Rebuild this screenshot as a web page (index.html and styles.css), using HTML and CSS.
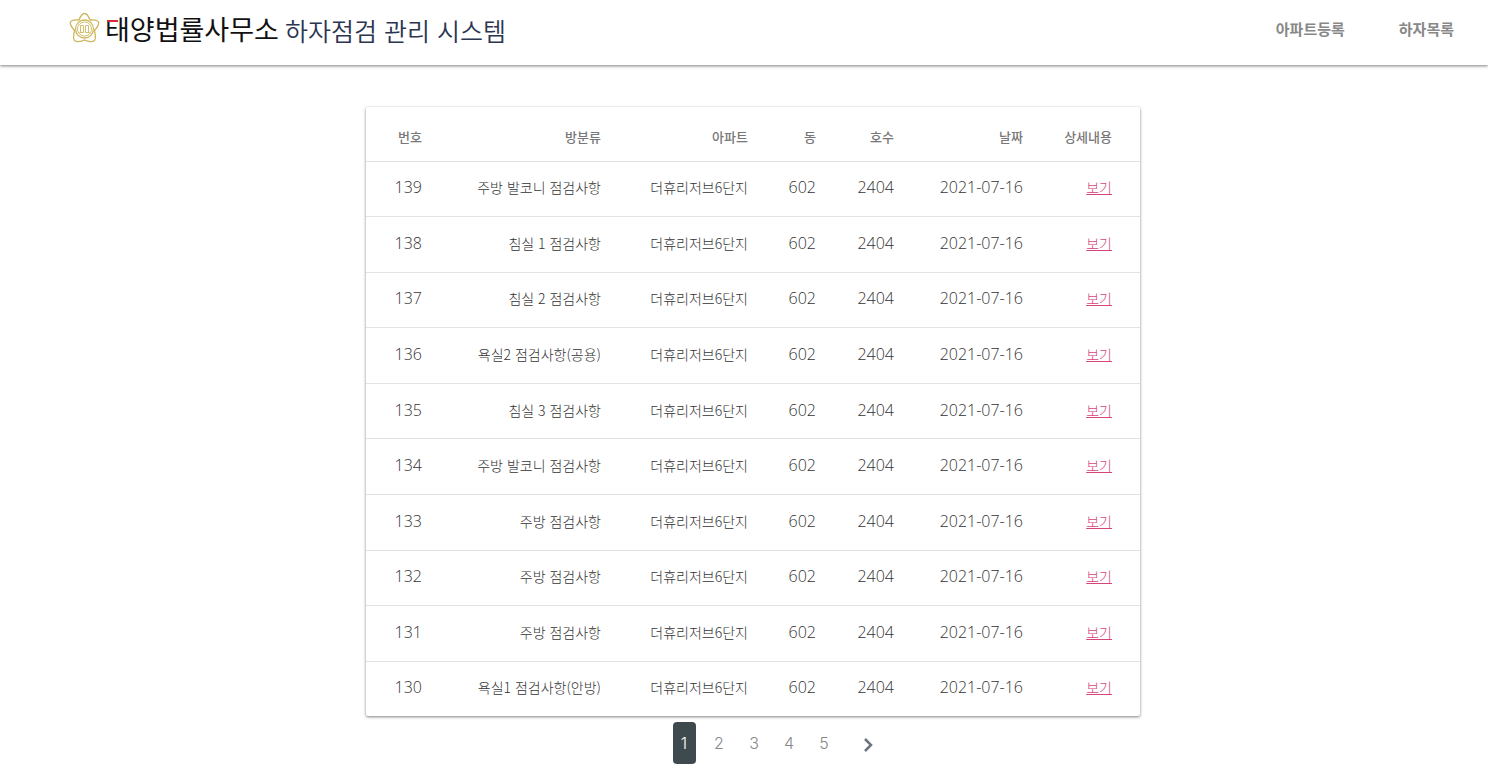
FILE: index.html
```html
<!DOCTYPE html>
<html lang="ko">
  <head>
    <meta charset="UTF-8" />
    <meta name="viewport" content="width=device-width, initial-scale=1.0" />
    <title>하자점검 관리 시스템</title>
    <link rel="stylesheet" href="styles.css">
  </head>
  <body>
    <header class="header">
      <a class="brand" href="/">
        <svg class="brand-logo" viewBox="0 0 32 32" aria-hidden="true">
          <path d="M11 8C12.500 4 14.500 1.500 16.500 1.500S20.500 4 22 8C26 7.500 29.500 8 30.500 10S29.500 15 26.500 18.500C27.500 23 28 27 26.500 28.500S20.500 30 16.500 28C12.500 30 8 30 6.500 28.500S5.500 23 6.500 18.500C3.500 15 1.500 12 2.500 10S7 7.500 11 8z" />
          <circle cx="16.500" cy="17" r="9" />
          <circle class="thin" cx="16.500" cy="17" r="7" />
          <path class="thin" d="M12.500 20.500v-7h3v7M17.500 20.500v-7h3v7M11.500 20.500h4M17.500 20.500h4" />
        </svg>
        <span class="brand-name">태양법률사무소</span>
        <span class="brand-title">하자점검 관리 시스템</span>
      </a>
      <nav class="menu">
        <a href="/apartment">아파트등록</a>
        <a href="/list">하자목록</a>
      </nav>
    </header>

    <main class="content">
      <table class="list">
        <colgroup>
          <col class="col-id">
          <col class="col-room">
          <col class="col-apt">
          <col class="col-dong">
          <col class="col-ho">
          <col class="col-date">
          <col class="col-view">
        </colgroup>
        <thead>
          <tr>
            <th>번호</th>
            <th>방분류</th>
            <th>아파트</th>
            <th>동</th>
            <th>호수</th>
            <th>날짜</th>
            <th>상세내용</th>
          </tr>
        </thead>
        <tbody>
          <tr>
            <td class="num">139</td>
            <td>주방 발코니 점검사항</td>
            <td>더휴리저브6단지</td>
            <td class="num">602</td>
            <td class="num">2404</td>
            <td class="num">2021-07-16</td>
            <td><a href="/list/139">보기</a></td>
          </tr>
          <tr>
            <td class="num">138</td>
            <td>침실 1 점검사항</td>
            <td>더휴리저브6단지</td>
            <td class="num">602</td>
            <td class="num">2404</td>
            <td class="num">2021-07-16</td>
            <td><a href="/list/138">보기</a></td>
          </tr>
          <tr>
            <td class="num">137</td>
            <td>침실 2 점검사항</td>
            <td>더휴리저브6단지</td>
            <td class="num">602</td>
            <td class="num">2404</td>
            <td class="num">2021-07-16</td>
            <td><a href="/list/137">보기</a></td>
          </tr>
          <tr>
            <td class="num">136</td>
            <td>욕실2 점검사항(공용)</td>
            <td>더휴리저브6단지</td>
            <td class="num">602</td>
            <td class="num">2404</td>
            <td class="num">2021-07-16</td>
            <td><a href="/list/136">보기</a></td>
          </tr>
          <tr>
            <td class="num">135</td>
            <td>침실 3 점검사항</td>
            <td>더휴리저브6단지</td>
            <td class="num">602</td>
            <td class="num">2404</td>
            <td class="num">2021-07-16</td>
            <td><a href="/list/135">보기</a></td>
          </tr>
          <tr>
            <td class="num">134</td>
            <td>주방 발코니 점검사항</td>
            <td>더휴리저브6단지</td>
            <td class="num">602</td>
            <td class="num">2404</td>
            <td class="num">2021-07-16</td>
            <td><a href="/list/134">보기</a></td>
          </tr>
          <tr>
            <td class="num">133</td>
            <td>주방 점검사항</td>
            <td>더휴리저브6단지</td>
            <td class="num">602</td>
            <td class="num">2404</td>
            <td class="num">2021-07-16</td>
            <td><a href="/list/133">보기</a></td>
          </tr>
          <tr>
            <td class="num">132</td>
            <td>주방 점검사항</td>
            <td>더휴리저브6단지</td>
            <td class="num">602</td>
            <td class="num">2404</td>
            <td class="num">2021-07-16</td>
            <td><a href="/list/132">보기</a></td>
          </tr>
          <tr>
            <td class="num">131</td>
            <td>주방 점검사항</td>
            <td>더휴리저브6단지</td>
            <td class="num">602</td>
            <td class="num">2404</td>
            <td class="num">2021-07-16</td>
            <td><a href="/list/131">보기</a></td>
          </tr>
          <tr>
            <td class="num">130</td>
            <td>욕실1 점검사항(안방)</td>
            <td>더휴리저브6단지</td>
            <td class="num">602</td>
            <td class="num">2404</td>
            <td class="num">2021-07-16</td>
            <td><a href="/list/130">보기</a></td>
          </tr>
        </tbody>
      </table>

      <nav class="pagination" aria-label="페이지">
        <button class="page active" type="button">1</button>
        <button class="page" type="button">2</button>
        <button class="page" type="button">3</button>
        <button class="page" type="button">4</button>
        <button class="page" type="button">5</button>
        <button class="page next" type="button" aria-label="다음">
          <svg viewBox="0 0 12 16" aria-hidden="true"><path d="M3 2l6 6-6 6" /></svg>
        </button>
      </nav>
    </main>
  </body>
</html>
```
FILE: styles.css
```css
* {
  box-sizing: border-box;
}

body {
  margin: 0;
  background-color: #fff;
  color: #333;
  font-family: 'Noto Sans CJK KR', sans-serif;
}

/* 상단 */
.header {
  display: flex;
  justify-content: space-between;
  align-items: center;
  height: 65px;
  padding: 0 34px 8px 68px;
  box-shadow: 0 1px 3px rgba(0, 0, 0, 0.5);
}

.brand {
  display: flex;
  align-items: center;
  text-decoration: none;
}

.brand-logo {
  width: 32px;
  height: 32px;
  margin-right: 5px;
  margin-bottom: 2px;
  fill: none;
  stroke: #cdb75c;
  stroke-width: 1.3;
}

.brand-logo .thin {
  stroke-width: 0.9;
}

.brand-name {
  position: relative;
  margin-right: 6px;
  color: #111;
  font-size: 27px;
  line-height: 40px;
}

/* 첫 글자의 붉은 획 */
.brand-name::before {
  content: '';
  position: absolute;
  top: 11px;
  left: 3px;
  width: 10px;
  height: 2px;
  background-color: #d8283c;
}

.brand-title {
  padding-top: 3px;
  color: #2b3550;
  font-size: 25px;
  font-weight: 350;
  line-height: 40px;
}

.menu {
  display: flex;
  gap: 54px;
}

.menu a {
  color: #888;
  font-size: 15px;
  font-weight: 700;
  text-decoration: none;
}

/* 목록 */
.content {
  padding: 42px 0 0 18px;
}

.list {
  width: 52vw;
  height: 609px;
  margin: 0 auto;
  border-collapse: collapse;
  table-layout: fixed;
  border-radius: 2px;
  box-shadow: 0 1px 3px rgba(0, 0, 0, 0.5);
}

.col-id {
  width: 84px;
}

.col-room {
  width: 179px;
}

.col-apt {
  width: 147px;
}

.col-dong {
  width: 68px;
}

.col-ho {
  width: 78px;
}

.col-date {
  width: 129px;
}

.col-view {
  width: 89px;
}

.list th,
.list td {
  padding: 0 28px 3px 0;
  font-size: 14px;
  text-align: right;
  white-space: nowrap;
}

.list th {
  height: 54px;
  padding-top: 8px;
  color: #777;
  font-size: 13px;
  font-weight: 500;
}

.list td {
  border-top: 1px solid #e3e3e3;
  font-weight: 300;
}

.list .num {
  font-family: 'Open Sans', 'Noto Sans CJK KR', sans-serif;
  font-size: 16px;
}

.list a {
  color: #d6457a;
}

/* 페이지 번호 */
.pagination {
  display: flex;
  justify-content: center;
  gap: 12px;
  padding: 6px 0 5px 46px;
}

.page {
  width: 23px;
  height: 42px;
  padding: 0;
  border: 0;
  border-radius: 4px;
  background: none;
  color: #888;
  font-family: Inter, sans-serif;
  font-size: 16px;
  font-weight: 300;
  cursor: pointer;
}

.page.active {
  background-color: #3f4a4f;
  color: #fff;
}

.next {
  margin-left: 9px;
}

.next svg {
  width: 12px;
  height: 16px;
  vertical-align: middle;
  fill: none;
  stroke: #6b7280;
  stroke-width: 2.5;
}
```
